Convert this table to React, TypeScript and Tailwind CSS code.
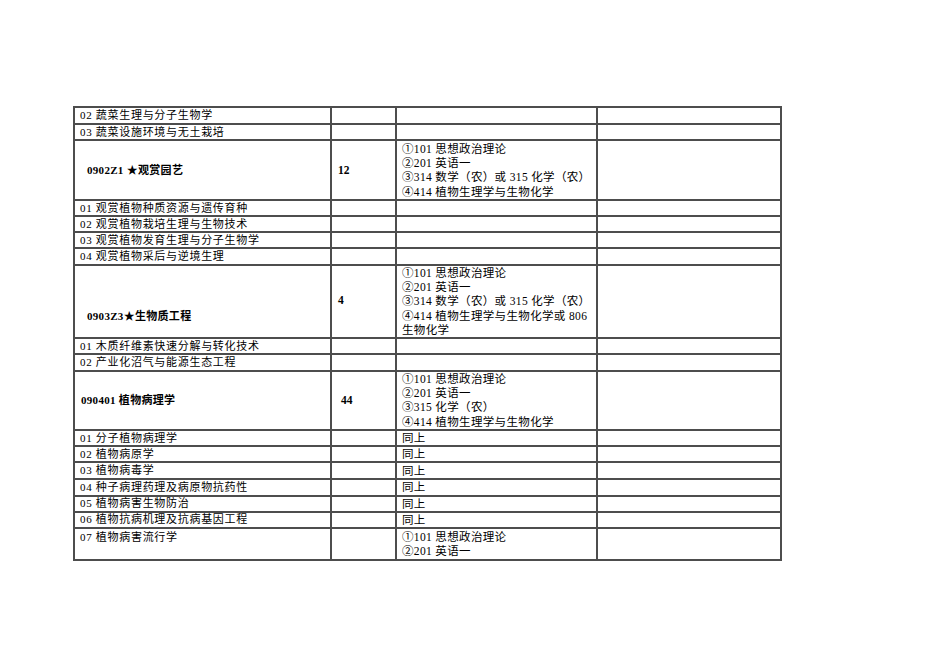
const exam1 = ['①101 思想政治理论', '②201 英语一', '③314 数学（农）或 315 化学（农）', '④414 植物生理学与生物化学'];
const exam2 = ['①101 思想政治理论', '②201 英语一', '③314 数学（农）或 315 化学（农）', '④414 植物生理学与生物化学或 806', '生物化学'];
const exam3 = ['①101 思想政治理论', '②201 英语一', '③315 化学（农）', '④414 植物生理学与生物化学'];
const exam4 = ['①101 思想政治理论', '②201 英语一'];

type Row = {
  h: string;
  name: string;
  bold?: boolean;
  nameCls?: string;
  count?: string;
  countCls?: string;
  exam?: string[] | string;
  examCls?: string;
};

const rows: Row[] = [
  { h: 'h-[17px]', name: '02 蔬菜生理与分子生物学' },
  { h: 'h-[16px]', name: '03 蔬菜设施环境与无土栽培' },
  { h: 'h-[60px]', name: '0902Z1 ★观赏园艺', bold: true, nameCls: 'pl-[12px]', count: '12', countCls: 'pl-[6px]', exam: exam1, examCls: 'pt-[1px]' },
  { h: 'h-[16px]', name: '01 观赏植物种质资源与遗传育种' },
  { h: 'h-[16px]', name: '02 观赏植物栽培生理与生物技术' },
  { h: 'h-[16px]', name: '03 观赏植物发育生理与分子生物学' },
  { h: 'h-[17px]', name: '04 观赏植物采后与逆境生理' },
  { h: 'h-[73px]', name: '0903Z3★生物质工程', bold: true, nameCls: 'pl-[12px] pt-[30px]', count: '4', countCls: 'pl-[6px] pb-[3px]', exam: exam2 },
  { h: 'h-[16px]', name: '01 木质纤维素快速分解与转化技术' },
  { h: 'h-[17px]', name: '02 产业化沼气与能源生态工程' },
  { h: 'h-[59px]', name: '090401 植物病理学', bold: true, nameCls: 'pl-[6px]', count: '44', countCls: 'pl-[9px]', exam: exam3 },
  { h: 'h-[16px]', name: '01 分子植物病理学', exam: '同上' },
  { h: 'h-[16px]', name: '02 植物病原学', exam: '同上' },
  { h: 'h-[17px]', name: '03 植物病毒学', exam: '同上' },
  { h: 'h-[16px]', name: '04 种子病理药理及病原物抗药性', exam: '同上' },
  { h: 'h-[16px]', name: '05 植物病害生物防治', exam: '同上' },
  { h: 'h-[16px]', name: '06 植物抗病机理及抗病基因工程', exam: '同上' },
  { h: 'h-[32px]', name: '07 植物病害流行学', exam: exam4, examCls: 'pt-[1px]' },
];

const cell = 'border-2 border-[#4d4d4d] p-0';

export default function App() {
  return (
    <div
      className="w-[950px] h-[672px] bg-white text-black pt-[106px] pl-[73px]"
      style={{ fontFamily: '"Liberation Serif", "Noto Sans CJK SC", serif' }}
    >
      <table className="border-collapse table-fixed border-2 border-[#222]">
        <colgroup>
          <col className="w-[257px]" />
          <col className="w-[65px]" />
          <col className="w-[201px]" />
          <col className="w-[184px]" />
        </colgroup>
        <tbody>
          {rows.map((r, i) => {
            const multi = Array.isArray(r.exam);
            return (
              <tr key={i} className={r.h}>
                <td
                  className={`${cell} text-[11px] leading-[13px] ${
                    r.bold
                      ? 'font-bold align-middle tracking-[0.3px]'
                      : multi
                        ? 'align-top pl-[5px] pt-[2px] tracking-[0.7px]'
                        : 'align-middle pl-[5px] tracking-[0.7px]'
                  } ${r.nameCls ?? ''}`}
                >
                  {r.name}
                </td>
                <td className={`${cell} text-[11.5px] leading-[13px] font-bold align-middle ${r.countCls ?? ''}`}>
                  {r.count}
                </td>
                <td
                  className={`${cell} text-[11.5px] leading-[14.2px] pl-[5px] tracking-[0.35px] ${
                    multi ? 'align-top' : 'align-middle leading-[13px]'
                  } ${r.examCls ?? ''}`}
                >
                  {multi
                    ? (r.exam as string[]).map((l) => <div key={l}>{l}</div>)
                    : r.exam}
                </td>
                <td className={cell} />
              </tr>
            );
          })}
        </tbody>
      </table>
    </div>
  );
}
